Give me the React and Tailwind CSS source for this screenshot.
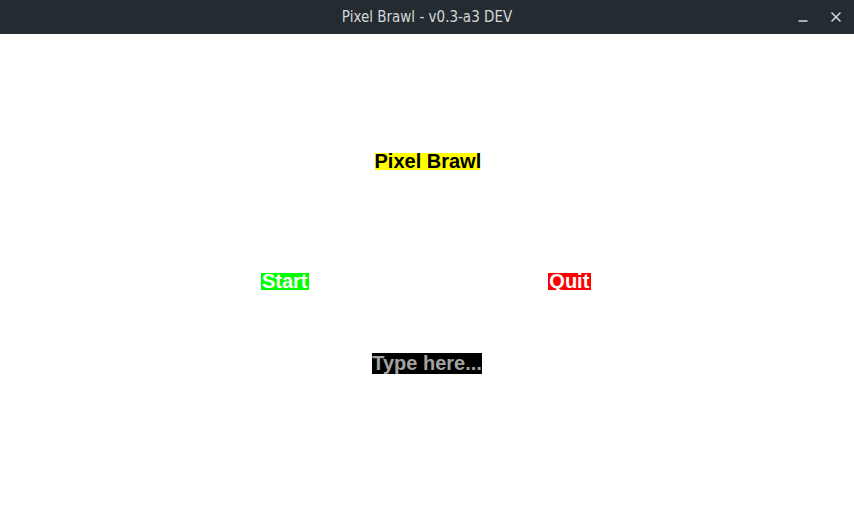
import { Minus, X } from 'lucide-react';

const label = "font-['Liberation_Sans',Arial,sans-serif] font-bold text-[20px] whitespace-nowrap text-center";

export default function App() {
  return (
    <div className="flex h-[514px] w-[854px] flex-col overflow-hidden bg-white">
      <header className="relative flex h-[34px] shrink-0 items-center justify-center bg-[#242c31]">
        <span className="font-['DejaVu_Sans',sans-serif] text-[15px] text-[#d3d7d9] [font-stretch:condensed]">
          Pixel Brawl - v0.3-a3 DEV
        </span>
        <div className="absolute right-[10px] top-0 flex h-full items-center gap-[18px] text-[#d3d7d9]">
          <Minus className="mt-[8px] h-[14px] w-[14px]" strokeWidth={2.2} />
          <X className="h-[16px] w-[16px]" strokeWidth={2.4} />
        </div>
      </header>

      <main className="flex flex-1 flex-col items-center pt-[119px]">
        <span className={`${label} h-[17px] w-[105px] bg-[#ffff00] text-[19px] leading-[17px] text-black`}>
          Pixel Brawl
        </span>

        <div className="mt-[103px] flex w-full justify-center">
          <div className="flex w-[284.67px] justify-center">
            <button className={`${label} h-[17px] w-[48px] bg-[#00ff00] leading-[17px] text-white`}>
              Start
            </button>
          </div>
          <div className="flex w-[284.67px] justify-center">
            <button className={`${label} h-[17px] w-[43px] bg-[#ff0000] leading-[17px] text-white`}>
              Quit
            </button>
          </div>
        </div>

        <div className={`${label} mt-[63px] h-[21px] w-[110px] bg-black leading-[20px] text-[#a3a3a3]`}>
          Type here...
        </div>
      </main>
    </div>
  );
}
